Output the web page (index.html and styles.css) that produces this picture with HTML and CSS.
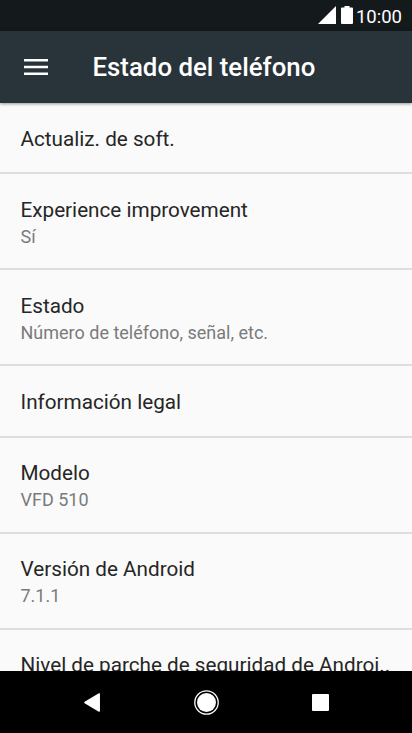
FILE: index.html
```html
<!DOCTYPE html>
<html lang="es">

<head>
    <meta charset="UTF-8">
    <meta name="viewport" content="width=device-width, initial-scale=1.0">
    <title>Estado del teléfono</title>
    <link rel="stylesheet" href="styles.css">
</head>

<body>
    <div class="status-bar">
        <svg class="signal" width="18" height="18" viewBox="0 0 18 18"><path d="M18 0V18H0z" fill="#fff"/></svg>
        <svg class="battery" width="12" height="18" viewBox="0 0 12 18"><path d="M3.500 0h5v1.500H11q1 0 1 1V17q0 1-1 1H1q-1 0-1-1V2.500q0-1 1-1h2.500z" fill="#fff"/></svg>
        <span class="clock">10:00</span>
    </div>

    <header>
        <svg class="menu" width="24" height="16" viewBox="0 0 24 16"><path d="M0 0h24v2.600H0zM0 6.700h24v2.600H0zM0 13.400h24v2.600H0z" fill="#fff"/></svg>
        <h1>Estado del teléfono</h1>
    </header>

    <main>
        <div class="item">
            <h2>Actualiz. de soft.</h2>
        </div>
        <div class="item two-lines">
            <h2>Experience improvement</h2>
            <p>Sí</p>
        </div>
        <div class="item two-lines">
            <h2>Estado</h2>
            <p>Número de teléfono, señal, etc.</p>
        </div>
        <div class="item">
            <h2>Información legal</h2>
        </div>
        <div class="item two-lines">
            <h2>Modelo</h2>
            <p>VFD 510</p>
        </div>
        <div class="item two-lines">
            <h2>Versión de Android</h2>
            <p>7.1.1</p>
        </div>
        <div class="item two-lines last">
            <h2>Nivel de parche de seguridad de Androi..</h2>
        </div>
    </main>

    <nav>
        <svg width="16" height="19" viewBox="0 0 16 19"><path d="M15.200 1v17L1 9.500z" fill="#fff" stroke="#fff" stroke-width="1.500" stroke-linejoin="round"/></svg>
        <svg width="25" height="25" viewBox="0 0 25 25"><circle cx="12.500" cy="12.500" r="11.700" fill="none" stroke="#fff" stroke-width="1.300"/><circle cx="12.500" cy="12.500" r="9.500" fill="#fff"/></svg>
        <svg width="17" height="17" viewBox="0 0 17 17"><rect width="17" height="17" rx="1" fill="#fff"/></svg>
    </nav>
</body>

</html>
```
FILE: styles.css
```css
* {
    box-sizing: border-box;
}

body {
    margin: 0;
    height: 733px;
    display: flex;
    flex-direction: column;
    overflow: hidden;
    background-color: #fafafa;
    font-family: Roboto, sans-serif;
}

h1, h2, p {
    margin: 0;
}

.status-bar {
    height: 31px;
    flex: none;
    display: flex;
    align-items: center;
    justify-content: flex-end;
    padding: 0 10px 1px 0;
    background-color: #14191c;
    color: white;
}

.battery {
    margin-left: 5px;
}

.clock {
    margin-left: 3px;
    padding-top: 3px;
    font-size: 18.5px;
}

header {
    height: 72px;
    flex: none;
    display: flex;
    align-items: center;
    padding-left: 24px;
    background-color: #28333a;
    color: white;
    box-shadow: 0 1px 3px rgba(0, 0, 0, 0.4);
    z-index: 1;
}

h1 {
    margin-left: 44.5px;
    font-size: 25.8px;
    font-weight: 500;
}

main {
    flex: 1;
    min-height: 0;
    overflow: hidden;
}

.item {
    height: 71.2px;
    padding: 21.8px 20.5px 0;
    border-bottom: 2px solid #dedede;
}

.two-lines {
    height: 96.1px;
}

.last {
    padding-top: 21px;
}

h2 {
    line-height: 28px;
    font-size: 20.7px;
    font-weight: 400;
    color: #262626;
    white-space: nowrap;
}

p {
    line-height: 25px;
    font-size: 18px;
    color: #7a7a7a;
}

nav {
    height: 62px;
    flex: none;
    display: flex;
    align-items: center;
    justify-content: space-between;
    padding: 1px 83px 0 84px;
    background-color: black;
}
```
